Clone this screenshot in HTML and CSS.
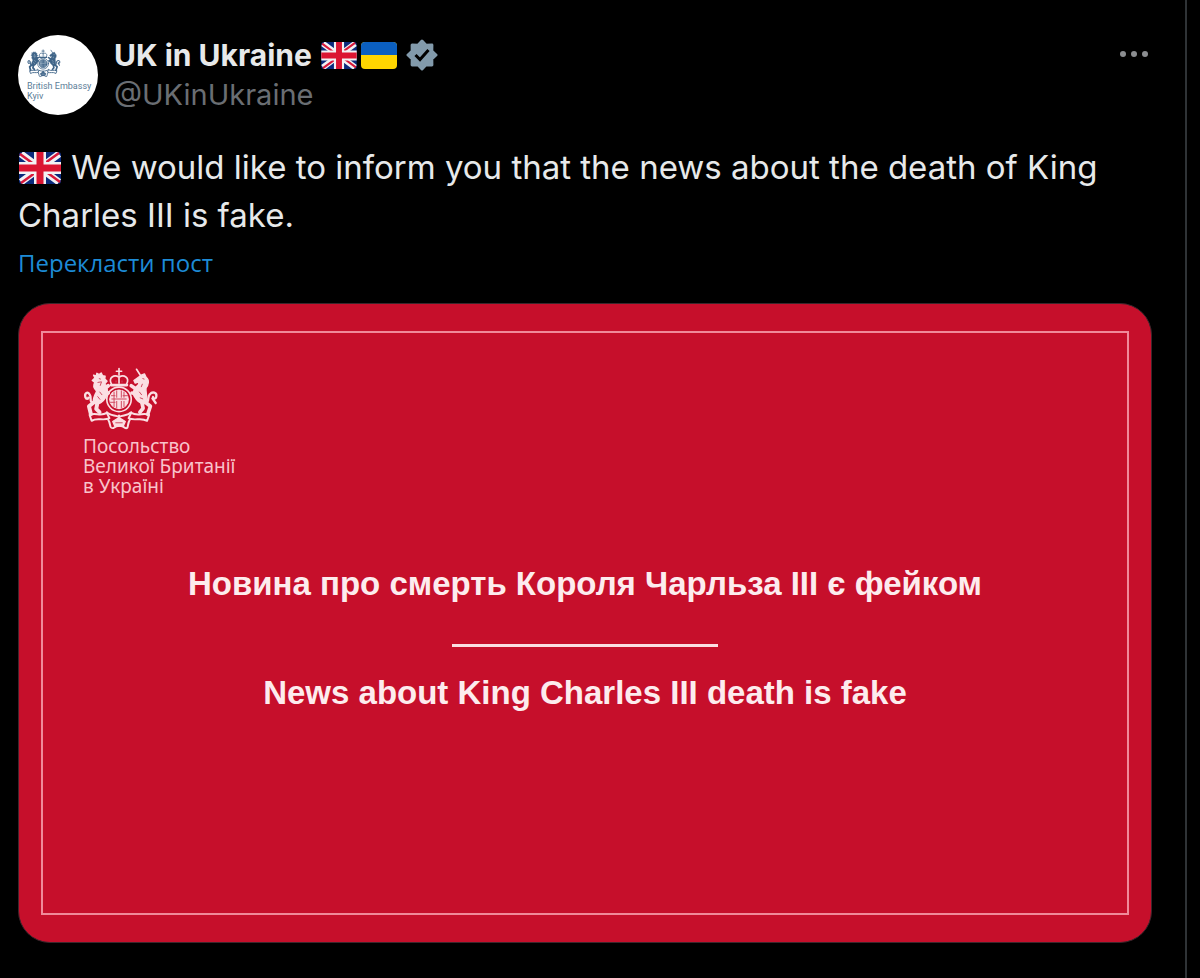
FILE: index.html
```html
<!DOCTYPE html>
<html lang="uk">
<head>
<meta charset="utf-8">
<meta name="viewport" content="width=device-width, initial-scale=1">
<title>UK in Ukraine</title>
<link rel="stylesheet" href="styles.css">
</head>
<body>
<svg class="sprite" aria-hidden="true">
  <symbol id="arms" viewBox="18 16 230 192">
    <g fill="none" stroke="currentColor" stroke-linecap="round" stroke-linejoin="round">
      <!-- tails -->
      <path stroke-width="7" d="M50 124C34 122 46 108 38 98C32 88 22 94 25 106C28 114 34 112 34 108"/>
      <path stroke-width="7" d="M206 122C220 124 212 106 220 98C228 88 242 92 240 104C238 114 228 112 230 106M228 110L238 124"/>
      <!-- legs -->
      <path stroke-width="12" d="M56 118L36 134L42 158M62 122L58 142L68 152M76 84L94 72M78 98L94 94"/>
      <path stroke-width="11" d="M202 118L222 134L214 158M196 122L200 140L190 152M182 84L164 72M182 96L166 94"/>
      <path stroke-width="5" d="M180 22L194 44"/>
      <!-- crown -->
      <path stroke-width="5" d="M127 20V40M119 28H135M104 66C94 48 112 36 127 46C142 36 160 48 150 66M127 46V64"/>
      <path stroke-width="8" d="M103 70H151"/>
      <!-- garter -->
      <ellipse cx="127" cy="113" rx="37" ry="37" stroke-width="5"/>
      <!-- scroll and compartment -->
      <path stroke-width="6" d="M38 160C56 152 72 166 90 154L98 170C78 180 62 166 44 178ZM218 160C200 152 184 166 164 154L156 170C176 180 192 166 212 178Z"/>
      <path stroke-width="6" d="M90 152C100 164 114 160 127 166C140 160 154 164 164 152M94 174C104 190 96 202 110 200C122 190 134 190 146 200C158 202 150 190 160 174M127 162V190"/>
    </g>
    <g fill="currentColor" stroke="currentColor" stroke-width="4" stroke-linejoin="round">
      <path d="M54 48L50 40L58 42L60 34L67 38L73 33L77 41L85 43L84 51L91 58L84 66C94 78 95 96 86 108C80 120 64 132 50 124C46 108 56 98 59 88C51 80 48 70 54 62L46 56Z"/>
      <path d="M194 40L204 36L209 46C220 54 216 70 209 78C206 92 215 104 210 124C194 132 180 116 172 102C167 88 174 78 186 68L188 60L176 64L172 56Z"/>
      <circle cx="127" cy="113" r="28"/>
      <path d="M108 180L127 168L146 180L140 194H114Z"/>
    </g>
    <g class="arms-detail" fill="none">
      <path d="M112 90V136M120 86V108M120 118V140M134 86V108M142 90V108M134 118V140M142 118V136M104 112H150M100 122H116M138 102H154M103 102H116"/>
      <path d="M66 50L72 52M62 62L74 60L70 72M68 90L76 100M62 104L70 114M198 50L204 52M198 66L194 76M188 90L196 100M190 108L200 112M118 56V62M136 56V62M116 184H138"/>
    </g>
  </symbol>
  <symbol id="flag-gb" viewBox="0 0 42 32">
    <rect width="42" height="32" rx="3" fill="#0b2a7c"/>
    <path d="M2 2L40 30M40 2L2 30" stroke="#f2f2f4" stroke-width="7"/>
    <path d="M1 2L18 14.500M41 30L24 17.500M40 1L22 14M2 31L20 18" stroke="#d8183a" stroke-width="2.500"/>
    <path d="M21 0V32M0 16H42" stroke="#f2f2f4" stroke-width="12"/>
    <path d="M21 0V32M0 16H42" stroke="#db1532" stroke-width="7"/>
  </symbol>
</svg>

<main class="timeline">
  <article class="post">
    <header class="post-header">
      <a class="avatar" href="#profile" aria-label="British Embassy Kyiv">
        <svg class="avatar-arms" aria-hidden="true"><use href="#arms"/></svg>
        <span class="avatar-text">British Embassy<br>Kyiv</span>
      </a>
      <div class="author">
        <a class="author-name" href="#profile">
          <span>UK in Ukraine</span>
          <span class="flags">
            <svg class="flag" role="img" aria-label="United Kingdom"><use href="#flag-gb"/></svg>
            <svg class="flag" viewBox="0 0 36 27" role="img" aria-label="Ukraine">
              <rect width="36" height="27" rx="4" fill="#ffd500"/>
              <path d="M4 0H32Q36 0 36 4V13H0V4Q0 0 4 0Z" fill="#0b5fc0"/>
            </svg>
          </span>
          <svg class="badge" viewBox="0 0 32 32" role="img" aria-label="Verified">
            <path fill="#829aab" stroke="#829aab" stroke-width="3" stroke-linejoin="round" d="M16 2L20 6.200L25.900 6.100L25.800 12L30 16L25.800 20L25.900 25.900L20 25.800L16 30L12 25.800L6.100 25.900L6.200 20L2 16L6.200 12L6.100 6.100L12 6.200Z"/>
            <path fill="none" stroke="#000" stroke-width="3" d="M9.500 16L14 20.500L22.500 11"/>
          </svg>
        </a>
        <a class="author-handle" href="#profile">@UKinUkraine</a>
      </div>
      <button class="more" type="button" aria-label="More">
        <svg viewBox="0 0 30 8" aria-hidden="true"><circle cx="4" cy="4" r="3"/><circle cx="15" cy="4" r="3"/><circle cx="26" cy="4" r="3"/></svg>
      </button>
    </header>

    <p class="post-text" lang="en"><svg class="flag-inline" role="img" aria-label="United Kingdom"><use href="#flag-gb"/></svg> We would like to inform you that the news about the death of King Charles III is fake.</p>
    <a class="translate" href="#translate">Перекласти пост</a>

    <section class="card">
      <div class="card-frame">
        <div class="embassy">
          <svg class="embassy-arms" aria-hidden="true"><use href="#arms"/></svg>
          <p class="embassy-name">Посольство<br>Великої Британії<br>в Україні</p>
        </div>
        <div class="notice">
          <h2 class="notice-title">Новина про смерть Короля Чарльза III є фейком</h2>
          <hr class="notice-rule">
          <h2 class="notice-title" lang="en">News about King Charles III death is fake</h2>
        </div>
      </div>
    </section>
  </article>
</main>
</body>
</html>
```
FILE: styles.css
```css
* { box-sizing: border-box; }

body {
  margin: 0;
  background: #000;
  color: #e7e9ea;
  font-family: Inter, "Noto Sans", sans-serif;
}

a { color: inherit; text-decoration: none; }
p, h2 { margin: 0; }

.sprite { display: none; }

.arms-detail { stroke: var(--arms-ground); stroke-width: 3; }

.timeline {
  min-height: 100vh;
  margin-right: 13px;
  border-right: 2px solid #2f3336;
}

.post { padding: 35px 33px 36px 18px; }

.post-header { display: flex; gap: 16px; }

.avatar {
  --arms-ground: #c3d3de;
  display: flex;
  flex-direction: column;
  flex: none;
  width: 80px;
  height: 80px;
  padding: 14px 0 0 9px;
  border-radius: 50%;
  background: #fff;
  color: #3f6488;
}

.avatar-arms { width: 34px; height: 29px; }

.avatar-text {
  margin-top: 3px;
  color: #5b7d97;
  font: 9px/10px Roboto, sans-serif;
  white-space: nowrap;
}

.author { display: flex; flex-direction: column; flex: 1; }

.author-name {
  display: flex;
  align-items: center;
  gap: 9px;
  font-size: 30px;
  font-weight: 700;
  line-height: 40px;
}

.flags { display: flex; gap: 4px; }
.flag { width: 36px; height: 27px; }
.badge { width: 32px; height: 32px; }

.author-handle {
  color: #6a6e73;
  font-size: 29px;
  line-height: 40px;
}

.more {
  align-self: flex-start;
  height: 38px;
  padding: 0 3px 0 0;
  border: 0;
  background: none;
  cursor: pointer;
}

.more svg { display: block; width: 30px; height: 8px; fill: #8b8d90; }

.post-text {
  margin-top: 28px;
  font-size: 33px;
  line-height: 48px;
}

.flag-inline { width: 44px; height: 32px; vertical-align: -5px; }

.translate {
  display: block;
  color: #1d8bd6;
  font: 24px/48px "Open Sans", sans-serif;
}

.card {
  margin-top: 16px;
  padding: 27px 22px;
  border: 1px solid #3d262c;
  border-radius: 32px;
  background: #c60f2b;
}

.card-frame {
  aspect-ratio: 1088 / 584;
  padding: 34px 40px;
  border: 2px solid #f08a9a;
}

.embassy { --arms-ground: #d04a60; color: #fbdfe3; }
.embassy-arms { display: block; width: 76px; height: 64px; }

.embassy-name {
  margin-top: 5px;
  color: #f9c3cb;
  font: 19px/20px "Noto Sans", sans-serif;
}

.notice {
  display: flex;
  flex-direction: column;
  align-items: center;
  margin-top: 68px;
}

.notice-title {
  color: #fdecee;
  font: bold 33px/40px "Liberation Sans", Arial, sans-serif;
  text-align: center;
}

.notice-rule {
  width: 266px;
  height: 3px;
  margin: 40px 0 26px;
  border: 0;
  background: #fbdfe3;
}
```
